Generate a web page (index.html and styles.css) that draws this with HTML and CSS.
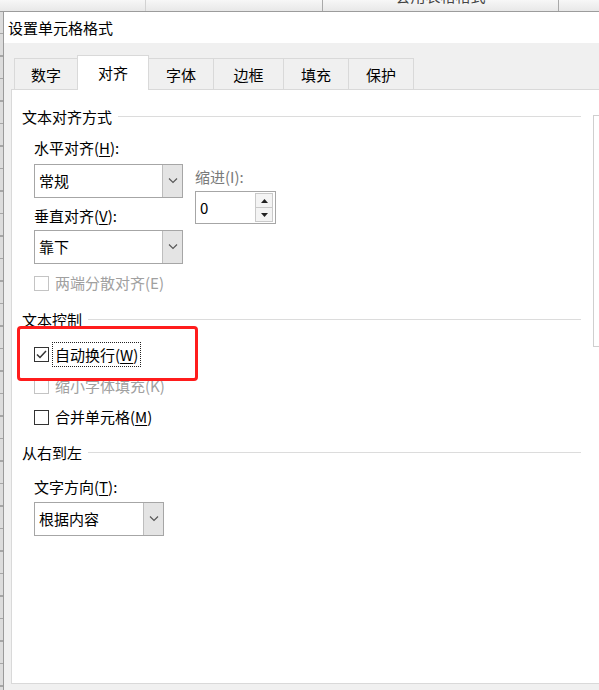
FILE: index.html
```html
<!DOCTYPE html>
<html lang="zh-CN">
<head>
<meta charset="utf-8">
<title>设置单元格格式</title>
<link rel="stylesheet" href="styles.css">
</head>
<body>
<div class="sheet-top">
  <div class="hc hc1"></div>
  <div class="hc hc2"></div>
  <div class="hc hc3"><span class="hc-text">套用表格格式</span></div>
  <div class="hc hc4"></div>
</div>
<div class="main">
  <div class="rowheads"></div>
  <div class="dialog">
    <div class="titlebar">设置单元格格式</div>
    <div class="dlg-body">
      <div class="tabs">
        <div class="tab t1">数字</div>
        <div class="tab t2 active">对齐</div>
        <div class="tab t3">字体</div>
        <div class="tab t4">边框</div>
        <div class="tab t5">填充</div>
        <div class="tab t6">保护</div>
      </div>
      <div class="panel">
        <div class="leftcol">
          <div class="ghead"><span>文本对齐方式</span><i class="rule"></i></div>
          <div class="lbl sub m-h">水平对齐(<u>H</u>):</div>
          <div class="align-area">
            <div class="align-col">
              <div class="combo m-c1"><span class="combo-text">常规</span><span class="combo-btn"><svg width="10" height="6" viewBox="0 0 10 6"><polyline points="1,0.5 5,4.5 9,0.5" fill="none" stroke="#555" stroke-width="1.1"/></svg></span></div>
              <div class="lbl m-v">垂直对齐(<u>V</u>):</div>
              <div class="combo m-c2"><span class="combo-text">靠下</span><span class="combo-btn"><svg width="10" height="6" viewBox="0 0 10 6"><polyline points="1,0.5 5,4.5 9,0.5" fill="none" stroke="#555" stroke-width="1.1"/></svg></span></div>
            </div>
            <div class="indent-col">
              <div class="lbl dim">缩进(I):</div>
              <div class="spin">
                <span class="spin-val">0</span>
                <div class="spin-btns">
                  <span class="sbtn"><svg width="7" height="4" viewBox="0 0 7 4"><polygon points="0,4 3.5,0 7,4" fill="#222"/></svg></span>
                  <span class="sbtn"><svg width="7" height="4" viewBox="0 0 7 4"><polygon points="0,0 3.5,4 7,0" fill="#222"/></svg></span>
                </div>
              </div>
            </div>
          </div>
          <div class="check disabled m-just"><span class="box"></span><span>两端分散对齐(E)</span></div>

          <div class="ghead m-g2"><span>文本控制</span><i class="rule"></i></div>
          <div class="check tall m-wrap"><span class="box"><svg width="13" height="13" viewBox="0 0 13 13"><polyline points="2,6.5 5,9.5 11,3" fill="none" stroke="#333" stroke-width="1.5"/></svg></span><span class="focus">自动换行(<u>W</u>)</span></div>
          <div class="check disabled m-shrink"><span class="box"></span><span>缩小字体填充(K)</span></div>
          <div class="check m-merge"><span class="box"></span><span>合并单元格(<u>M</u>)</span></div>

          <div class="ghead m-g3"><span>从右到左</span><i class="rule"></i></div>
          <div class="lbl sub m-dir">文字方向(<u>T</u>):</div>
          <div class="combo narrow m-c3"><span class="combo-text">根据内容</span><span class="combo-btn"><svg width="10" height="6" viewBox="0 0 10 6"><polyline points="1,0.5 5,4.5 9,0.5" fill="none" stroke="#555" stroke-width="1.1"/></svg></span></div>
        </div>
        <div class="orient"></div>
        <div class="highlight"></div>
      </div>
    </div>
  </div>
</div>
</body>
</html>
```
FILE: styles.css
```css
* { box-sizing: border-box; }
html, body { margin: 0; padding: 0; }
body {
  width: 599px;
  height: 690px;
  overflow: hidden;
  font-family: "Noto Sans CJK SC", "Microsoft YaHei", sans-serif;
  font-size: 15px;
  color: #000;
  background: #f0f0f0;
}
u { text-underline-offset: 2px; }

/* spreadsheet behind the dialog */
.sheet-top {
  display: flex;
  height: 12px;
  border-bottom: 1px solid #9c9c9c;
  background: linear-gradient(#f7f7f7, #e8e8e8);
  overflow: hidden;
}
.hc { height: 100%; flex: none; border-right: 1px solid #a9a9a9; }
.hc1 { width: 146px; border-right-color: #d2d2d2; }
.hc2 { width: 177px; }
.hc3 { width: 236px; display: flex; justify-content: center; }
.hc4 { flex: 1; border-right: none; }
.hc-text { font-size: 15px; line-height: 15px; margin-top: -12px; color: #444; }

.main { display: flex; height: 678px; }
.rowheads {
  width: 3px;
  flex: none;
  background: repeating-linear-gradient(to bottom, #dcdcdc 0 21px, #a6a6a6 21px 22.5px);
}

/* dialog */
.dialog {
  flex: none;
  width: 900px;
  border-left: 1px solid #9a9a9a;
  display: flex;
  flex-direction: column;
}
.titlebar {
  height: 31px;
  background: #fff;
  padding-left: 4px;
  display: flex;
  align-items: center;
  line-height: 20px;
}
.dlg-body { flex: 1; background: #f0f0f0; padding-top: 12px; }

.tabs {
  display: flex;
  align-items: flex-end;
  height: 34px;
  margin-left: 10px;
  position: relative;
  z-index: 1;
}
.tab {
  flex: none;
  height: 31px;
  border: 1px solid #d9d9d9;
  border-bottom: none;
  background: #f0f0f0;
  display: flex;
  align-items: center;
  justify-content: center;
  margin-left: -1px;
  line-height: 20px;
  padding-top: 1px;
}
.tab.t1 { width: 64px; margin-left: 0; }
.tab.t2 { width: 72px; }
.tab.t3 { width: 66px; }
.tab.t4 { width: 71px; }
.tab.t5 { width: 66px; }
.tab.t6 { width: 66px; }
.tab.active {
  height: 35px;
  margin-bottom: -1px;
  background: #fff;
  position: relative;
  z-index: 2;
  padding-top: 0;
}

.panel {
  margin-left: 7px;
  height: 595px;
  background: #fff;
  border: 1px solid #d9d9d9;
  position: relative;
  display: flex;
  align-items: flex-start;
  padding: 17px 0 0 10px;
}
.leftcol { width: 559px; flex: none; display: flex; flex-direction: column; }
.orient {
  flex: none;
  margin-left: 12px;
  margin-top: 8px;
  width: 200px;
  height: 232px;
  border: 1px solid #cfcfcf;
}

.ghead { display: flex; align-items: center; height: 20px; line-height: 20px; gap: 6px; white-space: nowrap; }
.ghead .rule { flex: 1; height: 1px; background: #dcdcdc; margin-top: -1px; }

.lbl { height: 20px; line-height: 20px; white-space: nowrap; }
.sub { padding-left: 12px; }
.dim { color: #7a7a7a; }

.align-area { display: flex; gap: 12px; padding-left: 12px; }
.align-col { width: 149px; display: flex; flex-direction: column; }
.indent-col { margin-top: 9px; display: flex; flex-direction: column; }

.combo {
  width: 149px;
  height: 34px;
  border: 1px solid #a6a6a6;
  background: #fff;
  display: flex;
  flex: none;
}
.combo.narrow { width: 130px; margin-left: 12px; }
.combo-text { flex: 1; padding-left: 4px; line-height: 32px; white-space: nowrap; }
.combo-btn {
  width: 20px;
  flex: none;
  background: #e4e4e4;
  border-left: 1px solid #bdbdbd;
  display: flex;
  align-items: center;
  justify-content: center;
}

.spin {
  margin-top: 4px;
  width: 81px;
  height: 33px;
  border: 1px solid #a6a6a6;
  background: #fff;
  display: flex;
  align-items: center;
  padding-left: 4px;
}
.spin-val { line-height: 20px; }
.spin-btns {
  margin-left: auto;
  margin-right: 2px;
  width: 18px;
  height: 29px;
  display: flex;
  flex-direction: column;
}
.sbtn {
  flex: 1;
  border: 1px solid #c9c9c9;
  background: #f4f4f4;
  display: flex;
  align-items: center;
  justify-content: center;
}
.sbtn + .sbtn { margin-top: -1px; }

.check {
  display: flex;
  align-items: center;
  height: 20px;
  line-height: 20px;
  padding-left: 12px;
  white-space: nowrap;
}
.check.tall { height: 25px; }
.box {
  width: 15px;
  height: 15px;
  flex: none;
  border: 1px solid #333;
  background: #fff;
  margin-right: 6px;
  display: flex;
  align-items: center;
  justify-content: center;
}
.check.disabled { color: #a0a0a0; }
.check.disabled .box { border-color: #c4c4c4; }
.focus {
  height: 25px;
  line-height: 23px;
  border: 1px dotted #222;
  padding: 0 2px;
  margin-left: -3px;
}

/* vertical rhythm */
.m-h { margin-top: 11px; }
.m-c1 { margin-top: 6px; }
.m-v { margin-top: 8px; }
.m-c2 { margin-top: 4px; }
.m-just { margin-top: 9px; }
.m-g2 { margin-top: 17px; }
.m-wrap { margin-top: 12px; }
.m-shrink { margin-top: 9px; }
.m-merge { margin-top: 11px; }
.m-g3 { margin-top: 16px; }
.m-dir { margin-top: 14px; }
.m-c3 { margin-top: 5px; }

/* red annotation box drawn over the dialog */
.highlight {
  position: absolute;
  left: 5px;
  top: 236px;
  width: 181px;
  height: 55px;
  border: 3px solid #ff1c1c;
  border-radius: 4px;
}
```
